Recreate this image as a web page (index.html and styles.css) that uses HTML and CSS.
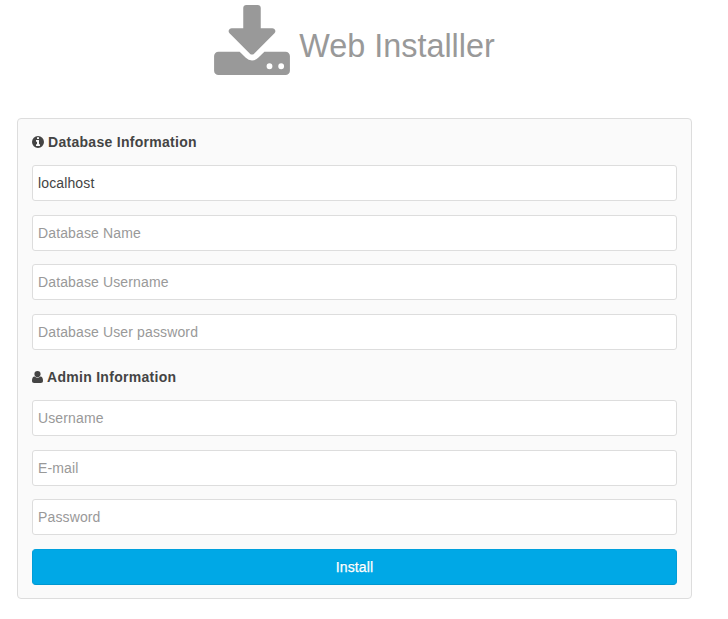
FILE: index.html
```html
<!DOCTYPE html>
<html lang="en">
<head>
<meta charset="utf-8">
<title>Web Installler</title>
<link rel="stylesheet" href="styles.css">
</head>
<body>
<header class="brand">
<svg class="brand-icon" viewBox="0 -1536 1664 1536" aria-hidden="true"><path fill-rule="evenodd" d="M1280 -192a64 64 0 1 1 -128 0a64 64 0 1 1 128 0zM1536 -192a64 64 0 1 1 -128 0a64 64 0 1 1 128 0zM1664 -416v320q0 40 -28 68t-68 28h-1472q-40 0 -68 -28t-28 -68v-320q0 -40 28 -68t68 -28h465l135 136q58 56 136 56t136 -56l136 -136h464q40 0 68 28t28 68zM1339 -985q17 41 -14 70l-448 448q-18 19 -45 19t-45 -19l-448 -448q-31 -29 -14 -70q17 -39 59 -39h256v-448q0 -26 19 -45t45 -19h256q26 0 45 19t19 45v448h256q42 0 59 39z"/></svg>
<h1>Web Installler</h1>
</header>
<form class="panel">
<h2><svg class="icon info" viewBox="0 0 1536 1536" aria-hidden="true"><path fill-rule="evenodd" d="M768 0a768 768 0 1 1 0 1536a768 768 0 1 1 0-1536zM1024 1248v-160q0-14-9-23t-23-9h-96v-512q0-14-9-23t-23-9h-320q-14 0-23 9t-9 23v160q0 14 9 23t23 9h96v320h-96q-14 0-23 9t-9 23v160q0 14 9 23t23 9h448q14 0 23-9t9-23zM896 352v-160q0-14-9-23t-23-9h-192q-14 0-23 9t-9 23v160q0 14 9 23t23 9h192q14 0 23-9t9-23z"/></svg>Database Information</h2>
<input type="text" value="localhost" aria-label="Database Host">
<input type="text" placeholder="Database Name">
<input type="text" placeholder="Database Username">
<input type="password" placeholder="Database User password">
<h2 class="admin"><svg class="icon user" viewBox="0 0 11 12" aria-hidden="true"><circle cx="5.5" cy="3.1" r="3.1"/><path d="M2.8 5.6Q5.5 8 8.2 5.6C10.4 5.6 11 7.7 11 9.8C11 11.2 10.2 12 8.8 12H2.2C.8 12 0 11.2 0 9.8C0 7.7.6 5.6 2.8 5.6z"/></svg>Admin Information</h2>
<input type="text" placeholder="Username">
<input type="email" placeholder="E-mail">
<input type="password" placeholder="Password">
<button type="button">Install</button>
</form>
</body>
</html>
```
FILE: styles.css
```css
* { box-sizing: border-box; }
body {
  margin: 0;
  padding: 5px 36px 0 17px;
  background: #fff;
  color: #444;
  font: 14px/20px "Liberation Sans", Arial, sans-serif;
}
.brand {
  display: flex;
  justify-content: center;
  height: 113px;
  color: #999;
}
.brand-icon {
  width: 76px;
  height: 70px;
  margin-right: 9px;
  fill: currentColor;
}
h1 {
  margin: 21px 0 0;
  font-size: 32.4px;
  line-height: 40px;
  font-weight: normal;
}
.panel {
  height: 481px;
  padding: 13px 14px;
  border: 1px solid #ddd;
  border-radius: 4px;
  background: #fafafa;
}
h2 {
  display: flex;
  align-items: center;
  margin: 0 0 13.1px;
  font-size: 14px;
  line-height: 20px;
  letter-spacing: 0.29px;
  color: #444;
}
.icon { fill: currentColor; }
.info { width: 12px; height: 12px; margin-right: 4px; }
.user { width: 11px; height: 12px; margin-right: 4px; }
input, button {
  display: block;
  width: 100%;
  height: 36px;
  margin: 0 0 13.5px;
  padding: 0 5px;
  border: 1px solid #ddd;
  border-radius: 3px;
  background: #fff;
  color: #444;
  font: inherit;
  letter-spacing: 0.13px;
}
input::placeholder { color: #999; opacity: 1; }
.panel .admin { margin-top: 17.6px; }
button {
  margin: 0;
  border-color: #00a1dd #009dd8 #0097d0;
  border-radius: 4px;
  background: #00a8e6;
  color: #fff;
  text-shadow: 0 -1px 0 rgba(0, 0, 0, 0.1);
  -webkit-text-stroke: 0.25px #fff;
}
```
